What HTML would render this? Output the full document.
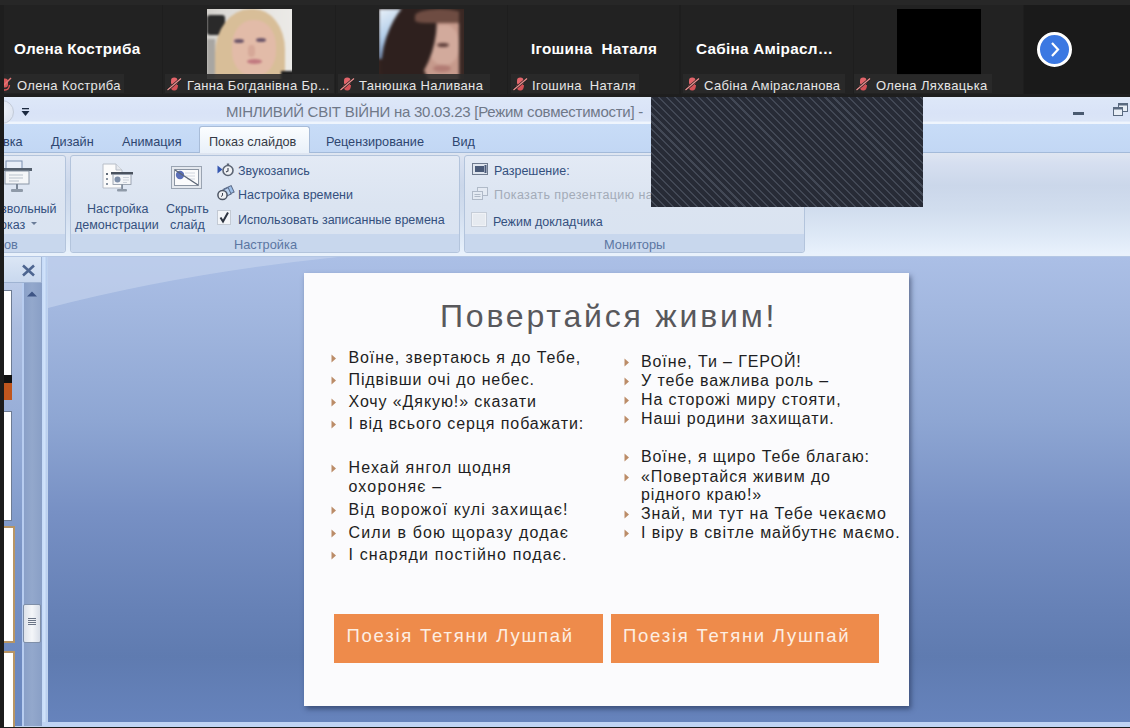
<!DOCTYPE html>
<html><head><meta charset="utf-8">
<style>
*{margin:0;padding:0;box-sizing:border-box}
html,body{width:1130px;height:728px;overflow:hidden;background:#1c1c1c;font-family:"Liberation Sans",sans-serif;position:relative}
.abs{position:absolute}
/* zoom strip */
#strip{left:0;top:0;width:1130px;height:97px;background:linear-gradient(#272727 0,#272727 5px,#1e1e1e 5px)}
.tile{position:absolute;top:5px;height:89px;background:#222}
.tname{position:absolute;color:#fff;font-weight:bold;font-size:15.3px;letter-spacing:.25px;white-space:nowrap}
.lbl{position:absolute;top:74px;height:19px;background:rgba(42,42,42,.88);color:#e6e6e6;font-size:13px;letter-spacing:.35px;white-space:nowrap;line-height:19px}
.mic{position:absolute;left:1px;top:2px}
/* ppt */
#ppt{left:4px;top:97px;width:1126px;height:631px;background:#c5d6ee}
#title{overflow:hidden;left:4px;top:97px;width:1126px;height:27px;background:linear-gradient(#e4ecf9 0,#dde7f8 8%,#d9e3f7 60%,#dbe5f7 88%,#eff5fd 94%,#eff5fd 100%)}
#tabs{left:4px;top:124px;width:1126px;height:29px;background:linear-gradient(#c8dcf7,#c2d7f4);border-bottom:1px solid #a3bad9}
#ribbon{left:4px;top:153px;width:1126px;height:102px;background:linear-gradient(#dfe6f1 0,#d6dff0 10%,#cbd7ea 32%,#d1ddee 55%,#dde8f6 80%,#e9f2fc 100%)}
#work{left:4px;top:256px;width:1126px;height:472px;background:#c0d3ee}
#slidebg{left:48px;top:258px;width:1082px;height:464px;background:linear-gradient(#a9bee3,#8aa4d2 35%,#6f8ac0 70%,#6281b8)}
#slide{left:304px;top:273px;width:605px;height:433px;background:#fbfbfd;box-shadow:2px 3px 5px rgba(20,30,60,.5)}
.ttl{color:#6f7888;font-size:15px;letter-spacing:-.25px;white-space:nowrap}
.tab{position:absolute;top:11px;font-size:12.7px;color:#2e4670;white-space:nowrap}
.grp{position:absolute;top:2px;height:98px;border:1px solid #b3c4dc;border-radius:3px;background:linear-gradient(#e3eaf5,#dbe4f1 50%,#d9e3f1)}
.glbl{position:absolute;left:0;right:0;bottom:0;height:18px;background:#c8d7ed;border-radius:0 0 3px 3px}
#hatch{left:651px;top:97px;width:272px;height:110px;background:repeating-linear-gradient(45deg,#272b36 0,#272b36 4.1px,#424855 4.1px,#424855 5.6px)}
.rt{position:absolute;font-size:12.5px;line-height:1;color:#34507e;white-space:nowrap}
.gt{position:absolute;font-size:12.8px;line-height:1;color:#5b76a2;white-space:nowrap}
.thumb{left:4px;width:8px;background:#fff;border:1px solid #6e7c94;border-left:none}
.st{position:absolute;font-size:16px;line-height:1;color:#1e1e22;white-space:nowrap}
.btn{background:#ee8b4b}
</style></head><body>

<div id="strip" class="abs">
 <div class="tile" style="left:4px;width:158px"></div>
 <div class="tile" style="left:163px;width:172px"></div>
 <div class="tile" style="left:336px;width:171px"></div>
 <div class="tile" style="left:508px;width:171px"></div>
 <div class="tile" style="left:681px;width:172px"></div>
 <div class="tile" style="left:854px;width:169px"></div>
 <div class="tile" style="left:1024px;width:106px;background:#1a1a1a"></div>
 <!-- photos -->
 <div class="abs" id="ph1" style="left:207px;top:9px;width:85px;height:70px;overflow:hidden;background:#dcdad6">
  <div class="abs" style="left:-4px;top:-4px;width:93px;height:80px;filter:blur(1.3px)">
   <div class="abs" style="left:0;top:0;width:93px;height:80px;background:linear-gradient(90deg,#cfcdc9 0,#dad8d4 20%,#e6e4e0 60%,#ecebe8 100%)"></div>
   <div class="abs" style="left:4px;top:10px;width:18px;height:20px;background:#2a2a2a;border-radius:3px"></div>
   <div class="abs" style="left:4px;top:34px;width:8px;height:40px;background:#a8a6a2"></div>
   <div class="abs" style="left:12px;top:4px;width:70px;height:90px;border-radius:50% 45% 30% 30%;background:#d8be98"></div>
   <div class="abs" style="left:29px;top:15px;width:44px;height:56px;border-radius:46% 46% 44% 44%;background:#e2bba8"></div>
   <div class="abs" style="left:31px;top:34px;width:10px;height:4px;border-radius:50%;background:#6b5468"></div>
   <div class="abs" style="left:53px;top:33px;width:10px;height:4px;border-radius:50%;background:#6b5468"></div>
   <div class="abs" style="left:45px;top:40px;width:7px;height:12px;border-radius:40%;background:#d6a898"></div>
   <div class="abs" style="left:44px;top:54px;width:15px;height:5px;border-radius:50%;background:#c27a80"></div>
   <div class="abs" style="left:78px;top:66px;width:20px;height:20px;background:#1e1e1e"></div>
  </div>
</div>
<div class="abs" id="ph2" style="left:379px;top:9px;width:85px;height:70px;overflow:hidden;background:#30221f">
  <div class="abs" style="left:-4px;top:-4px;width:93px;height:80px;filter:blur(1.4px)">
   <div class="abs" style="left:0;top:0;width:93px;height:80px;background:#33231f"></div>
   <div class="abs" style="left:4px;top:4px;width:36px;height:50px;background:linear-gradient(150deg,#e8f0f8 0,#b6d0ea 40%,#7d9cc4 70%,rgba(60,50,60,0) 85%)"></div>
   <div class="abs" style="left:46px;top:12px;width:44px;height:68px;border-radius:45% 40% 35% 45%;background:#c69a8c"></div>
   <div class="abs" style="left:54px;top:20px;width:30px;height:40px;border-radius:45%;background:#d2aa9c"></div>
   <div class="abs" style="left:10px;top:-10px;width:48px;height:100px;transform:rotate(18deg);border-radius:50%;background:#2e201e"></div>
   <div class="abs" style="left:40px;top:4px;width:50px;height:14px;border-radius:50% 50% 20% 20%;background:#6e4c42"></div>
   <div class="abs" style="left:62px;top:38px;width:12px;height:4px;border-radius:50%;background:#5a3a36"></div>
   <div class="abs" style="left:58px;top:60px;width:18px;height:7px;border-radius:50%;background:#b27c74"></div>
   <div class="abs" style="left:84px;top:4px;width:10px;height:76px;background:#3a2824"></div>
  </div>
</div>
<div class="abs" style="left:897px;top:9px;width:84px;height:66px;background:#000"></div>
 <!-- big names -->
 <div class="tname" style="left:14px;top:40px">Олена Костриба</div>
 <div class="tname" style="left:531px;top:40px">Ігошина&nbsp; Наталя</div>
 <div class="tname" style="left:696px;top:40px">Сабіна Амірасл…</div>
 <!-- labels -->
 <div class="lbl" style="left:4px;width:120px;overflow:hidden"><svg class="mic" style="left:-8px" width="16" height="16"><rect x="6" y="2.5" width="6" height="9" rx="3" fill="#d9585a"/><path d="M4.5 9 Q5 14 9 14 Q13 14 13.5 9" stroke="#d9585a" stroke-width="1.4" fill="none"/><path d="M2 15 L15 2" stroke="#e07878" stroke-width="1.4"/></svg><span style="position:absolute;left:13px;top:1.5px">Олена Костриба</span></div>
 <div class="lbl" style="left:165px;width:169px"><svg class="mic" width="16" height="16"><rect x="5" y="1.5" width="6.5" height="8" rx="3.2" fill="#e2646a"/><path d="M4.5 9 Q4.5 14.5 8.2 14.5 Q12 14.5 12 9 Z" fill="#d45258"/><path d="M1.5 14 L15 2.5" stroke="#1e1e1e" stroke-width="2.6"/><path d="M1.5 14 L15 2.5" stroke="#e89090" stroke-width="1.3"/></svg><span style="position:absolute;left:22px;top:1.5px">Ганна Богданівна Бр...</span></div>
 <div class="lbl" style="left:338px;width:152px"><svg class="mic" width="16" height="16"><rect x="5" y="1.5" width="6.5" height="8" rx="3.2" fill="#e2646a"/><path d="M4.5 9 Q4.5 14.5 8.2 14.5 Q12 14.5 12 9 Z" fill="#d45258"/><path d="M1.5 14 L15 2.5" stroke="#1e1e1e" stroke-width="2.6"/><path d="M1.5 14 L15 2.5" stroke="#e89090" stroke-width="1.3"/></svg><span style="position:absolute;left:21px;top:1.5px">Танюшка Наливана</span></div>
 <div class="lbl" style="left:511px;width:128px"><svg class="mic" width="16" height="16"><rect x="5" y="1.5" width="6.5" height="8" rx="3.2" fill="#e2646a"/><path d="M4.5 9 Q4.5 14.5 8.2 14.5 Q12 14.5 12 9 Z" fill="#d45258"/><path d="M1.5 14 L15 2.5" stroke="#1e1e1e" stroke-width="2.6"/><path d="M1.5 14 L15 2.5" stroke="#e89090" stroke-width="1.3"/></svg><span style="position:absolute;left:21px;top:1.5px">Ігошина&nbsp; Наталя</span></div>
 <div class="lbl" style="left:683px;width:162px"><svg class="mic" width="16" height="16"><rect x="5" y="1.5" width="6.5" height="8" rx="3.2" fill="#e2646a"/><path d="M4.5 9 Q4.5 14.5 8.2 14.5 Q12 14.5 12 9 Z" fill="#d45258"/><path d="M1.5 14 L15 2.5" stroke="#1e1e1e" stroke-width="2.6"/><path d="M1.5 14 L15 2.5" stroke="#e89090" stroke-width="1.3"/></svg><span style="position:absolute;left:21px;top:1.5px">Сабіна Амірасланова</span></div>
 <div class="lbl" style="left:854px;width:138px"><svg class="mic" width="16" height="16"><rect x="5" y="1.5" width="6.5" height="8" rx="3.2" fill="#e2646a"/><path d="M4.5 9 Q4.5 14.5 8.2 14.5 Q12 14.5 12 9 Z" fill="#d45258"/><path d="M1.5 14 L15 2.5" stroke="#1e1e1e" stroke-width="2.6"/><path d="M1.5 14 L15 2.5" stroke="#e89090" stroke-width="1.3"/></svg><span style="position:absolute;left:22px;top:1.5px">Олена Ляхвацька</span></div>
 <div class="abs" style="left:1037px;top:32px;width:35px;height:35px;border-radius:50%;background:#3b78e2;border:3px solid #fff"></div>
 <svg class="abs" style="left:1037px;top:32px" width="35" height="35"><path d="M15 11 L21 17.5 L15 24" stroke="#fff" stroke-width="2.2" fill="none"/></svg>
</div>

<div id="ppt" class="abs"></div>
<div id="title" class="abs">
  <div class="abs" style="left:-14px;top:3px;width:24px;height:24px;border-radius:50%;background:radial-gradient(circle at 50% 40%,#eef2f9,#dde4f1 75%);border:1px solid #c3cbd8"></div>
  <svg class="abs" style="left:16px;top:9px" width="12" height="12"><rect x="2" y="2" width="7" height="1.3" fill="#1c2a40"/><path d="M1.5 5 L9.5 5 L5.5 10 Z" fill="#1c2a40"/></svg>
  <div class="abs ttl" style="left:222px;top:6px">МІНЛИВИЙ СВІТ ВІЙНИ на 30.03.23 [Режим совместимости] -</div>
  <div class="abs" style="left:1069px;top:15px;width:11px;height:2.5px;background:#4a5a70"></div>
  <svg class="abs" style="left:1109px;top:6px" width="17" height="14"><rect x="5.5" y="0.5" width="9" height="8" fill="#e8eef6" stroke="#5a6a80"/><rect x="5.5" y="0.5" width="9" height="2" fill="#5a6a80"/><rect x="0.5" y="4.5" width="9" height="8" fill="#e8eef6" stroke="#5a6a80"/><rect x="0.5" y="4.5" width="9" height="2" fill="#5a6a80"/></svg>
</div>
<div id="tabs" class="abs">
  <div class="tab" style="left:-1px">вка</div>
  <div class="tab" style="left:47px">Дизайн</div>
  <div class="tab" style="left:118px">Анимация</div>
  <div class="abs" style="left:195px;top:2px;width:111px;height:27px;border:1px solid #a8bcd8;border-bottom:none;border-radius:3px 3px 0 0;background:linear-gradient(#fbfdff,#e9f0f9)"></div>
  <div class="tab" style="left:205px;color:#353a45">Показ слайдов</div>
  <div class="tab" style="left:322px">Рецензирование</div>
  <div class="tab" style="left:448px">Вид</div>
</div>
<div id="ribbon" class="abs">
  <div class="grp" style="left:-10px;width:72px"><div class="glbl"></div></div>
  <div class="grp" style="left:66px;width:390px"><div class="glbl"></div></div>
  <div class="grp" style="left:460px;width:341px"><div class="glbl"></div></div>
</div>
<div id="rc" class="abs" style="left:0;top:0">
 <div class="rt" style="left:1px;top:203px">звольный</div>
 <div class="rt" style="left:0px;top:219px">оказ</div>
 <svg class="abs" style="left:31px;top:222px" width="7" height="4"><path d="M0 0 L6 0 L3 3Z" fill="#6a7c98"/></svg>
 <div class="rt" style="left:87px;top:203px">Настройка</div>
 <div class="rt" style="left:75px;top:219px">демонстрации</div>
 <div class="rt" style="left:166px;top:203px">Скрыть</div>
 <div class="rt" style="left:170px;top:219px">слайд</div>
 <div class="rt" style="left:238px;top:164.5px">Звукозапись</div>
 <div class="rt" style="left:238px;top:188.5px">Настройка времени</div>
 <div class="rt" style="left:238px;top:214px">Использовать записанные времена</div>
 <div class="rt" style="left:494px;top:164.5px">Разрешение:</div>
 <div class="rt" style="left:494px;top:189px;color:#a3abb8;letter-spacing:.4px">Показать презентацию на</div>
 <div class="rt" style="left:493px;top:215.5px">Режим докладчика</div>
 
 <!-- icons -->
 <svg class="abs" style="left:0;top:160px" width="34" height="36">
   <rect x="6" y="1" width="16" height="10" fill="#e8eef8" stroke="#7b8fb0"/>
   <rect x="2" y="8" width="30" height="3" fill="#55606e"/>
   <rect x="5" y="11" width="24" height="13" fill="#f4f6f8" stroke="#8a96a6"/>
   <path d="M9 15h14M9 18h14M9 21h10" stroke="#b9c2cc" stroke-width="1"/>
   <rect x="16" y="24" width="2" height="6" fill="#7a8696"/>
   <rect x="11" y="29" width="12" height="3" rx="1" fill="#8f9aa8"/>
 </svg>
 <svg class="abs" style="left:102px;top:163px" width="32" height="30">
   <path d="M1 1 H14 L20 7 V25 H1 Z" fill="#fbfbfb" stroke="#b8bec8"/>
   <path d="M14 1 V7 H20" fill="#e6e9ee" stroke="#b8bec8"/>
   <rect x="4" y="10" width="2" height="2" fill="#606a78"/><rect x="4" y="15" width="2" height="2" fill="#8a94a2"/><rect x="4" y="20" width="2" height="2" fill="#8a94a2"/>
   <rect x="9" y="9" width="22" height="2.5" fill="#4a525e"/>
   <rect x="11" y="11.5" width="18" height="10" fill="#f2f4f7" stroke="#8a94a2" stroke-width=".8"/>
   <circle cx="15.5" cy="16.5" r="3" fill="#7d8ea8"/>
   <path d="M21 14.5h6M21 17h6M21 19.5h4" stroke="#c0c8d2" stroke-width=".8"/>
   <rect x="19.3" y="21.5" width="1.6" height="5" fill="#7a8696"/>
   <rect x="15" y="26" width="10" height="2.5" rx="1" fill="#8f9aa8"/>
 </svg>
 <svg class="abs" style="left:171px;top:166px" width="31" height="24">
   <rect x="0.5" y="0.5" width="30" height="22" fill="#e4e8ee" stroke="#9aa4b2"/>
   <rect x="3.5" y="3.5" width="24" height="16" fill="#fbfbfc" stroke="#8c96a4"/>
   <circle cx="9" cy="9" r="4.2" fill="#5b6fb8"/>
   <path d="M14 7h10M14 10h10M16 13h8" stroke="#c8ced8" stroke-width=".8"/>
   <path d="M4 4 L27 19" stroke="#5a6474" stroke-width="1.3"/>
 </svg>
 <svg class="abs" style="left:216px;top:163px" width="18" height="14">
   <path d="M1.5 2.5 L6.5 6.5 L1.5 10.5Z" fill="#3557b0"/>
   <circle cx="12" cy="7.5" r="5" fill="#f0f2f5" stroke="#5c6574" stroke-width="1.6"/>
   <rect x="10.8" y="0.5" width="2.4" height="2" fill="#5c6574"/>
   <path d="M12 5 V8 L10 9" stroke="#3a4250" stroke-width="1.1" fill="none"/>
 </svg>
 <svg class="abs" style="left:216px;top:185px" width="19" height="16">
   <rect x="9" y="2" width="8" height="7" fill="#9fc0e8" stroke="#5a6a88" transform="rotate(-25 13 5.5)"/>
   <rect x="6" y="4" width="8" height="7" fill="#b9d2f0" stroke="#5a6a88" transform="rotate(-25 10 7.5)"/>
   <circle cx="6.5" cy="10" r="4.6" fill="#eef0f3" stroke="#4d5564" stroke-width="1.5"/>
   <path d="M6.5 8 V10.5 L5 11.5" stroke="#3a4250" stroke-width="1" fill="none"/>
 </svg>
 <svg class="abs" style="left:217px;top:210px" width="15" height="16">
   <rect x="0.5" y="0.5" width="13" height="14" fill="#f3f5f8" stroke="#c3cad4"/>
   <path d="M3.5 7.5 L6 11.5 L11 2.5" stroke="#2e3440" stroke-width="2" fill="none"/>
 </svg>
 <svg class="abs" style="left:472px;top:163px" width="16" height="12">
   <rect x="0.5" y="0.5" width="15" height="11" fill="#dfe5ee" stroke="#6e7a8e"/>
   <rect x="3" y="3" width="9" height="6" fill="#4a5a78"/>
   <rect x="12.5" y="2" width="2" height="8" fill="#4a5a78"/>
 </svg>
 <svg class="abs" style="left:472px;top:187px" width="16" height="14" opacity=".45">
   <rect x="5.5" y="0.5" width="10" height="8" fill="#eef1f5" stroke="#7a8696"/>
   <rect x="0.5" y="4.5" width="10" height="8" fill="#eef1f5" stroke="#7a8696"/>
   <path d="M2.5 7.5h6M2.5 9.5h6" stroke="#7a8696"/>
 </svg>
 <svg class="abs" style="left:471px;top:212px" width="16" height="16">
   <rect x="0.5" y="0.5" width="15" height="14" fill="#f0f2f6" stroke="#c6cdd8"/>
   <rect x="2" y="2" width="12" height="11" fill="#e6eaf0"/>
 </svg>
<div class="gt" style="left:4px;top:239px">ов</div>
 <div class="gt" style="left:234px;top:239px">Настройка</div>
 <div class="gt" style="left:604px;top:239px">Мониторы</div>
</div>
<div id="work" class="abs"></div>
<div class="abs" style="left:4px;top:254px;width:1126px;height:2px;background:#e9f1fb"></div>
<div class="abs" style="left:4px;top:256px;width:1126px;height:1px;background:#b4c7e4"></div>
<!-- pane header -->
<div class="abs" style="left:4px;top:257px;width:38px;height:26px;background:linear-gradient(#dbe6f5,#c9d8ee);border-right:1px solid #9fb3d2;border-bottom:1px solid #9fb3d2"></div>
<svg class="abs" style="left:21px;top:264px" width="15" height="13"><path d="M2 1.5 L13 11.5 M13 1.5 L2 11.5" stroke="#4d6590" stroke-width="2.6"/></svg>
<!-- pane body -->
<div class="abs" style="left:4px;top:283px;width:38px;height:443px;background:linear-gradient(#bccbe8 0,#aabcdf 10%,#8fa7d4 40%,#7b95c6 60%,#6d89c0 85%,#6a88c0 100%)"></div>
<div class="abs thumb" style="top:290px;height:110px"><div class="abs" style="left:0;top:84px;width:8px;height:8px;background:#111"></div><div class="abs" style="left:0;top:92px;width:8px;height:17px;background:#c0561e"></div></div>
<div class="abs thumb" style="top:411px;height:110px"></div>
<div class="abs thumb" style="top:526px;height:117px;width:11px;border:2px solid #b89565;border-left:none"></div>
<div class="abs thumb" style="top:651px;height:80px;width:11px;border:2px solid #b89565;border-left:none"></div>
<!-- scrollbar -->
<div class="abs" style="left:22px;top:283px;width:20px;height:443px;background:linear-gradient(90deg,#b8cdf0 0,#b8cdf0 2px,#8aa0c8 2px,#93a8cc 50%,#899fc6 100%)"></div>
<svg class="abs" style="left:26px;top:290px" width="12" height="8"><path d="M1 6.5 L6 1.5 L11 6.5Z" fill="#3e5585"/></svg>
<div class="abs" style="left:23px;top:604px;width:18px;height:39px;border:1px solid #7f8fa8;border-radius:2px;background:linear-gradient(90deg,#dde2ea,#f4f6f9 50%,#d8dee8)"></div>
<svg class="abs" style="left:27px;top:617px" width="10" height="10"><path d="M1 1.5h8M1 3.5h8M1 5.5h8M1 7.5h8" stroke="#6a7486" stroke-width="1"/></svg>
<!-- divider -->
<div class="abs" style="left:42px;top:257px;width:5px;height:469px;background:linear-gradient(90deg,#c5daf8,#d0e2fa 50%,#b4caec)"></div>
<!-- slide bg -->
<div class="abs" style="left:48px;top:257px;width:1082px;height:465px;background:linear-gradient(#abbfe6 0,#a2b7df 12%,#8ea6d3 35%,#7790c4 55%,#6681b6 76%,#5f7bb0 86%,#6683bc 100%)"></div>
<svg class="abs" style="left:48px;top:257px" width="1082" height="60"><path d="M0 0 L290 0 Q132 16.5 0 51 Z" fill="#c8d6ef" opacity=".6"/></svg>
<div class="abs" style="left:42px;top:722px;width:1088px;height:5px;background:#c0d4f4"></div>
<div class="abs" style="left:0;top:727px;width:1130px;height:1px;background:#1c1c1c"></div>
<div id="slide" class="abs"></div>
<div class="st" style="left:440px;top:299.5px;font-size:32px;color:#58585c;letter-spacing:2.8px">Повертайся живим!</div>
<div class="st" style="left:348.5px;top:349.8px;letter-spacing:0.9px">Воїне, звертаюсь я до Тебе,</div>
<svg class="abs" style="left:331px;top:353.8px" width="6" height="9"><path d="M0.5 0.5 L5 4.5 L0.5 8.5Z" fill="#bb8c68"/></svg>
<div class="st" style="left:348.5px;top:371.9px;letter-spacing:0.9px">Підвівши очі до небес.</div>
<svg class="abs" style="left:331px;top:375.9px" width="6" height="9"><path d="M0.5 0.5 L5 4.5 L0.5 8.5Z" fill="#bb8c68"/></svg>
<div class="st" style="left:348.5px;top:393.7px;letter-spacing:0.9px">Хочу «Дякую!» сказати</div>
<svg class="abs" style="left:331px;top:397.7px" width="6" height="9"><path d="M0.5 0.5 L5 4.5 L0.5 8.5Z" fill="#bb8c68"/></svg>
<div class="st" style="left:348.5px;top:416.4px;letter-spacing:0.9px">І від всього серця побажати:</div>
<svg class="abs" style="left:331px;top:420.4px" width="6" height="9"><path d="M0.5 0.5 L5 4.5 L0.5 8.5Z" fill="#bb8c68"/></svg>
<div class="st" style="left:348.5px;top:460.1px;letter-spacing:1.15px">Нехай янгол щодня</div>
<svg class="abs" style="left:331px;top:464.1px" width="6" height="9"><path d="M0.5 0.5 L5 4.5 L0.5 8.5Z" fill="#bb8c68"/></svg>
<div class="st" style="left:348.5px;top:478.7px;letter-spacing:1.15px">охороняє –</div>
<div class="st" style="left:348.5px;top:501.7px;letter-spacing:1.15px">Від ворожої кулі захищає!</div>
<svg class="abs" style="left:331px;top:505.70000000000005px" width="6" height="9"><path d="M0.5 0.5 L5 4.5 L0.5 8.5Z" fill="#bb8c68"/></svg>
<div class="st" style="left:348.5px;top:524.6px;letter-spacing:1.15px">Сили в бою щоразу додає</div>
<svg class="abs" style="left:331px;top:528.6px" width="6" height="9"><path d="M0.5 0.5 L5 4.5 L0.5 8.5Z" fill="#bb8c68"/></svg>
<div class="st" style="left:348.5px;top:547.1px;letter-spacing:1.15px">І снаряди постійно подає.</div>
<svg class="abs" style="left:331px;top:551.1px" width="6" height="9"><path d="M0.5 0.5 L5 4.5 L0.5 8.5Z" fill="#bb8c68"/></svg>
<div class="st" style="left:641px;top:354.4px;letter-spacing:0.9px">Воїне, Ти – ГЕРОЙ!</div>
<svg class="abs" style="left:624px;top:358.4px" width="6" height="9"><path d="M0.5 0.5 L5 4.5 L0.5 8.5Z" fill="#bb8c68"/></svg>
<div class="st" style="left:641px;top:373.4px;letter-spacing:0.9px">У тебе важлива роль –</div>
<svg class="abs" style="left:624px;top:377.4px" width="6" height="9"><path d="M0.5 0.5 L5 4.5 L0.5 8.5Z" fill="#bb8c68"/></svg>
<div class="st" style="left:641px;top:392.3px;letter-spacing:0.9px">На сторожі миру стояти,</div>
<svg class="abs" style="left:624px;top:396.3px" width="6" height="9"><path d="M0.5 0.5 L5 4.5 L0.5 8.5Z" fill="#bb8c68"/></svg>
<div class="st" style="left:641px;top:411.3px;letter-spacing:0.9px">Наші родини захищати.</div>
<svg class="abs" style="left:624px;top:415.3px" width="6" height="9"><path d="M0.5 0.5 L5 4.5 L0.5 8.5Z" fill="#bb8c68"/></svg>
<div class="st" style="left:641px;top:449.2px;letter-spacing:0.9px">Воїне, я щиро Тебе благаю:</div>
<svg class="abs" style="left:624px;top:453.2px" width="6" height="9"><path d="M0.5 0.5 L5 4.5 L0.5 8.5Z" fill="#bb8c68"/></svg>
<div class="st" style="left:641px;top:468.7px;letter-spacing:0.9px">«Повертайся живим до</div>
<svg class="abs" style="left:624px;top:472.7px" width="6" height="9"><path d="M0.5 0.5 L5 4.5 L0.5 8.5Z" fill="#bb8c68"/></svg>
<div class="st" style="left:641px;top:487.1px;letter-spacing:0.9px">рідного краю!»</div>
<div class="st" style="left:641px;top:506.0px;letter-spacing:0.9px">Знай, ми тут на Тебе чекаємо</div>
<svg class="abs" style="left:624px;top:510.0px" width="6" height="9"><path d="M0.5 0.5 L5 4.5 L0.5 8.5Z" fill="#bb8c68"/></svg>
<div class="st" style="left:641px;top:525.0px;letter-spacing:0.9px">І віру в світле майбутнє маємо.</div>
<svg class="abs" style="left:624px;top:529.0px" width="6" height="9"><path d="M0.5 0.5 L5 4.5 L0.5 8.5Z" fill="#bb8c68"/></svg>
<div class="abs btn" style="left:334px;top:614px;width:269px;height:49px"></div>
<div class="abs btn" style="left:611px;top:614px;width:268px;height:49px"></div>
<div class="st" style="left:346.5px;top:626.8px;font-size:18.5px;color:#fdeee2;letter-spacing:1.75px">Поезія Тетяни Лушпай</div>
<div class="st" style="left:623px;top:626.8px;font-size:18.5px;color:#fdeee2;letter-spacing:1.75px">Поезія Тетяни Лушпай</div>
<div id="hatch" class="abs"></div>
<div class="abs" style="left:0;top:97px;width:4px;height:631px;background:#1c1c1c"></div>
</body></html>
